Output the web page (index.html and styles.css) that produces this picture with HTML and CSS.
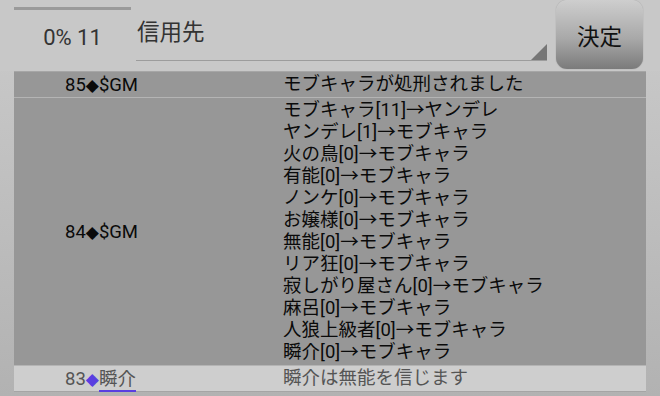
FILE: index.html
```html
<!DOCTYPE html>
<html lang="ja">
<head>
    <meta charset="UTF-8">
    <meta name="viewport" content="width=device-width, initial-scale=1.0">
    <title>投票</title>
    <link rel="stylesheet" href="styles.css">
</head>
<body>

    <div class="vote-bar">
        <div class="rate">0% 11</div>
        <div class="spinner">
            <span class="spinner-text">信用先</span>
            <span class="spinner-arrow"></span>
        </div>
        <button class="decide">決定</button>
    </div>

    <div class="log">
        <div class="log-row">
            <div class="who">85<span class="mark">◆</span>$GM</div>
            <div class="msg">モブキャラが処刑されました</div>
        </div>
        <div class="log-row">
            <div class="who">84<span class="mark">◆</span>$GM</div>
            <div class="msg">
                モブキャラ[11]→ヤンデレ<br>
                ヤンデレ[1]→モブキャラ<br>
                火の鳥[0]→モブキャラ<br>
                有能[0]→モブキャラ<br>
                ノンケ[0]→モブキャラ<br>
                お嬢様[0]→モブキャラ<br>
                無能[0]→モブキャラ<br>
                リア狂[0]→モブキャラ<br>
                寂しがり屋さん[0]→モブキャラ<br>
                麻呂[0]→モブキャラ<br>
                人狼上級者[0]→モブキャラ<br>
                瞬介[0]→モブキャラ
            </div>
        </div>
        <div class="log-row player">
            <div class="who">83<span class="mark">◆</span><span class="name">瞬介</span></div>
            <div class="msg">瞬介は無能を信じます</div>
        </div>
    </div>

</body>
</html>
```

FILE: styles.css
```css
/* General Styles */
body {
    font-family: Roboto, "Noto Sans CJK JP", sans-serif;
    margin: 0;
    padding: 0;
    height: 396px;
    overflow: hidden;
    background: linear-gradient(#cbcbcb, #b2b2b2);
    color: #0a0a0a;
}

/* Vote bar */
.vote-bar {
    display: flex;
    height: 71px;
    padding: 0 17px 0 14px;
    background-color: #c8c8c8;
}

.rate {
    width: 117px;
    height: 48px;
    margin-top: 7px;
    padding-top: 15px;
    border-top: 3px solid #9a9a9a;
    text-align: center;
    font-size: 22px;
    line-height: 26px;
    color: #333;
}

.spinner {
    display: flex;
    justify-content: space-between;
    align-items: flex-end;
    width: 411px;
    height: 60px;
    margin-left: 5px;
    border-bottom: 1px solid #9c9c9c;
}

.spinner-text {
    align-self: flex-start;
    margin-top: 18px;
    margin-left: 1px;
    font-size: 22.5px;
    line-height: 28px;
    color: #333;
}

.spinner-arrow {
    width: 0;
    height: 0;
    border-left: 16px solid transparent;
    border-bottom: 16px solid #767676;
}

.decide {
    width: 87px;
    height: 69px;
    margin-left: 9px;
    padding: 0;
    border: none;
    border-radius: 11px;
    background: linear-gradient(#cecece, #a9a9a9 55%, #7b7b7b);
    box-shadow: 0 0 1px #888;
    font-family: Roboto, "Noto Sans CJK JP", sans-serif;
    font-size: 22.5px;
    color: #111;
}

/* Log table */
.log {
    margin: 0 14px;
    border-top: 1px solid #a6a6a6;
    background-color: #c8c8c8;
}

.log-row {
    display: grid;
    grid-template-columns: 269px 1fr;
    background-color: #979797;
    border-bottom: 1px solid #b4b4b4;
    font-size: 18.5px;
    line-height: 22px;
}

.who {
    align-self: center;
    padding-left: 51px;
}

.msg {
    padding: 1px 0 2px;
}

.mark {
    font-family: "DejaVu Sans", sans-serif;
    font-size: 17px;
}

.log-row.player {
    background-color: #cecece;
    border-bottom-color: #a5a5a5;
    color: #555;
}

.player .mark {
    color: #5a3fe0;
}

.player .name {
    border-bottom: 2px solid #5a3fe0;
}
```
